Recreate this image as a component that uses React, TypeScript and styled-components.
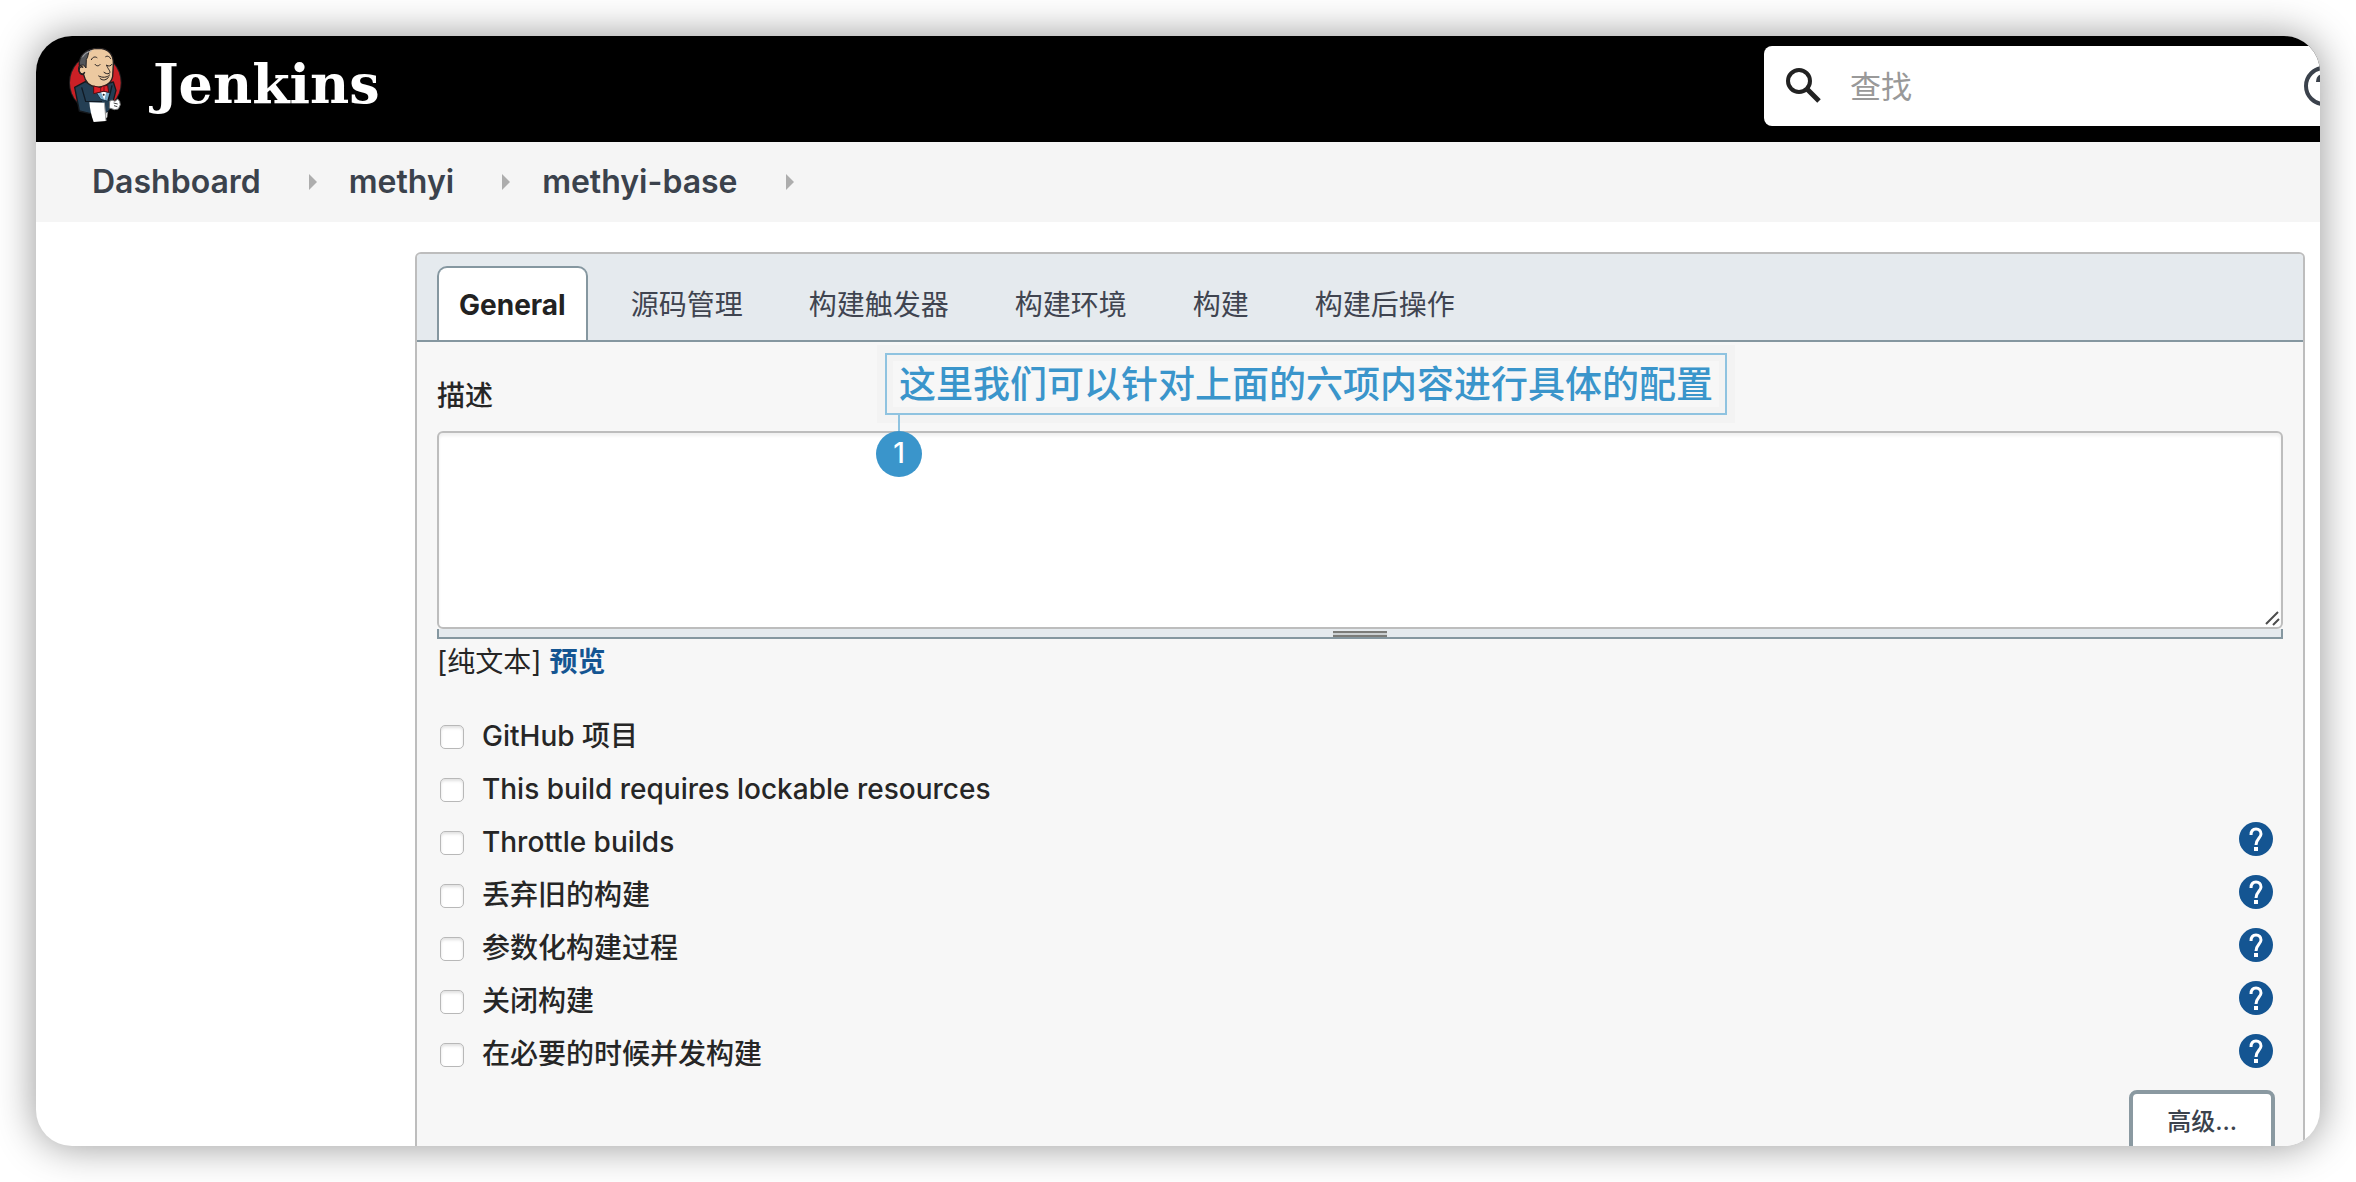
import React from "react";
import styled, { createGlobalStyle } from "styled-components";

const GlobalStyle = createGlobalStyle`
  *, *::before, *::after { box-sizing: border-box; }
  body {
    margin: 0;
    background: #ffffff;
    color: #262626;
    font-family: Inter, "Noto Sans CJK SC", sans-serif;
    font-size: 28px;
    line-height: 40px;
  }
  button, input, textarea { font-family: inherit; }
`;

const Stage = styled.div`
  height: 100vh;
  padding: 36px;
`;

const Window = styled.div`
  display: flex;
  flex-direction: column;
  height: 100%;
  overflow: hidden;
  border-radius: 36px;
  background: #ffffff;
  box-shadow: 0 0 40px rgba(0, 0, 0, 0.42);
`;

const Header = styled.header`
  display: flex;
  flex: none;
  justify-content: space-between;
  align-items: flex-start;
  height: 106px;
  padding: 10px 0 0 30px;
  background: #000000;
`;

const Brand = styled.a`
  display: flex;
  gap: 28px;
  color: #ffffff;
  text-decoration: none;
`;

const BrandName = styled.span`
  font-family: "DejaVu Serif", serif;
  font-size: 54px;
  font-weight: 700;
  line-height: 76px;
`;

const SearchBox = styled.div`
  display: flex;
  flex: none;
  align-items: center;
  gap: 26px;
  width: 600px;
  height: 80px;
  margin-right: -44px;
  padding: 0 20px;
  border-radius: 8px;
  background: #ffffff;
`;

const SearchInput = styled.input`
  flex: 1;
  min-width: 0;
  padding: 2px 0 0;
  border: 0;
  outline: 0;
  background: transparent;
  font-size: 31px;
  line-height: 48px;
  &::placeholder { color: #999999; opacity: 1; }
`;

const IconButton = styled.button`
  display: flex;
  flex: none;
  padding: 0;
  border: 0;
  background: transparent;
  cursor: pointer;
`;

const Breadcrumbs = styled.nav`
  display: flex;
  flex: none;
  align-items: center;
  height: 80px;
  padding-left: 56px;
  background: #f5f5f5;
`;

const Crumb = styled.a`
  color: #3b424c;
  font-size: 32px;
  font-weight: 600;
  text-decoration: none;
`;

const CrumbArrow = styled.span`
  flex: none;
  margin: 0 32px 0 48px;
  border: 8px solid transparent;
  border-right-width: 0;
  border-left-color: #adadad;
`;

const Main = styled.main`
  display: flex;
  flex: 1;
  min-height: 0;
  padding: 30px 15px 0 379px;
`;

const Panel = styled.form`
  flex: 1;
  height: max-content;
  min-width: 0;
  border: 2px solid #bdbdbd;
  border-radius: 6px;
  background: #f7f7f7;
`;

const TabBar = styled.div`
  display: flex;
  gap: 20px;
  padding: 12px 20px 0;
  border-bottom: 2px solid #8597a0;
  border-radius: 4px 4px 0 0;
  background: #e5eaee;
`;

const Tab = styled.button<{ $active?: boolean }>`
  height: 74px;
  padding: 2px ${(p) => (p.$active ? 20 : 21)}px 0;
  border: 2px solid ${(p) => (p.$active ? "#8597a0" : "transparent")};
  border-bottom: 0;
  border-radius: 10px 10px 0 0;
  background: ${(p) => (p.$active ? "#ffffff" : "transparent")};
  color: ${(p) => (p.$active ? "#222222" : "#3f4450")};
  font-size: 28px;
  font-weight: ${(p) => (p.$active ? 700 : 400)};
  line-height: 40px;
  cursor: pointer;
`;

const PanelBody = styled.div`
  position: relative;
  padding: 34px 20px 60px;
`;

const FieldLabel = styled.label`
  display: block;
  margin-bottom: 15px;
  font-weight: 500;
`;

const EditorFrame = styled.div`
  position: relative;
`;

const Editor = styled.textarea`
  display: block;
  width: 100%;
  height: 198px;
  padding: 12px;
  border: 2px solid #bdbdbd;
  border-radius: 6px;
  outline: 0;
  background: #ffffff;
  box-shadow: inset 0 3px 3px rgba(0, 0, 0, 0.06);
  font-size: 28px;
  resize: none;
`;

const ResizeCorner = styled.svg`
  position: absolute;
  right: 2px;
  bottom: 2px;
`;

const DragBar = styled.div`
  display: flex;
  justify-content: center;
  height: 10px;
  padding-top: 2px;
  border: 2px solid #8597a0;
  border-top: 0;
  background: #e5eaee;
  cursor: row-resize;
`;

const DragHandle = styled.span`
  width: 54px;
  height: 6px;
  border: solid #7b7c79;
  border-width: 2px 0;
  background: #cbd0d2;
`;

const FormatRow = styled.div`
  display: flex;
  gap: 8px;
  margin: 3px 0 28px;
`;

const PreviewLink = styled.a`
  color: #145592;
  font-weight: 700;
  text-decoration: none;
`;

const OptionRow = styled.div`
  display: flex;
  align-items: center;
  height: 53px;
  padding: 0 10px 0 3px;
`;

const Checkbox = styled.input`
  flex: none;
  width: 24px;
  height: 24px;
  margin: 0 18px 0 0;
  border: 1px solid #b8b8b8;
  border-radius: 5px;
  appearance: none;
  background: #ffffff;
  box-shadow: inset 0 2px 3px rgba(0, 0, 0, 0.12);
  &:checked { background: #145592; }
`;

const OptionLabel = styled.label`
  flex: 1;
  padding-bottom: 2px;
  font-weight: 500;
`;

const HelpButton = styled(IconButton)`
  margin-bottom: 8px;
`;

const Actions = styled.div`
  display: flex;
  justify-content: flex-end;
  padding: 9px 8px 0 0;
`;

const AdvancedButton = styled.button`
  padding: 8px 34px;
  border: 4px solid #8a99a1;
  border-radius: 8px;
  background: #ffffff;
  color: #3b424c;
  font-size: 24px;
  font-weight: 500;
  line-height: 40px;
  cursor: pointer;
`;

const Annotation = styled.aside`
  position: absolute;
  z-index: 1;
  top: 11px;
  left: 468px;
  display: flex;
  flex-direction: column;
  align-items: flex-start;
  color: #3a95cb;
`;

const AnnotationText = styled.div`
  padding: 5px 12px 3px;
  border: 2px solid #8fc3e0;
  background: #f7f7f7;
  box-shadow: 0 0 0 8px #f3f3f3, inset 0 0 0 6px #f3f3f3;
  font-size: 37px;
  font-weight: 500;
  line-height: 50px;
  white-space: nowrap;
`;

const AnnotationStem = styled.span`
  width: 2px;
  height: 16px;
  margin-left: 13px;
  background: #8fc3e0;
`;

const AnnotationBadge = styled.span`
  display: flex;
  align-items: center;
  justify-content: center;
  width: 46px;
  height: 46px;
  margin-left: -9px;
  padding-bottom: 2px;
  border-radius: 50%;
  background: #3a95cb;
  color: #ffffff;
  font-size: 28px;
  font-weight: 500;
`;

function JenkinsLogo() {
  return (
    <svg width="59" height="79" viewBox="200 140 177 237" aria-hidden="true">
      <ellipse cx="288" cy="250" rx="79" ry="85" fill="#231f20" />
      <ellipse cx="288" cy="250" rx="76" ry="82" fill="#cb2026" />
      <path d="M226 264 L258 247 L284 262 L342 248 L350 273 L341 307 L324 340 L270 342 L240 335 Z" fill="#243f54" stroke="#15191d" strokeWidth="4" strokeLinejoin="round" />
      <path d="M240 196 C240 165 265 148 296 147 C327 147 343 165 342 194 L340 231 C336 252 315 266 290 263 C270 260 258 250 253 226 C236 227 232 197 248 196 Z" fill="#ecc9a0" stroke="#231f20" strokeWidth="4" />
      <path d="M240 198 C239 174 251 157 272 151 C264 164 268 172 261 180 L260 206 L253 197 Z" fill="#54565a" stroke="#231f20" strokeWidth="3" />
      <path d="M249 174 C256 163 264 158 277 154" stroke="#a9abae" strokeWidth="3" fill="none" />
      <path d="M252 204 C240 197 235 213 244 222 C249 226 255 223 256 218" fill="#ecc9a0" stroke="#231f20" strokeWidth="4" />
      <path d="M276 181 C280 172 288 171 293 175 M319 172 C325 168 331 172 334 178 M287 195 C291 201 298 201 302 196 M322 198 C328 202 335 200 338 195 M322 198 C324 208 336 216 330 222 C324 225 318 222 314 219 M298 230 C309 236 323 235 331 227 M302 237 C310 246 323 242 328 233" fill="none" stroke="#231f20" strokeWidth="3" strokeLinecap="round" />
      <path d="M291 280 L315 275 L334 280 L326 306 L304 300 Z" fill="#76aac8" stroke="#183247" strokeWidth="3" />
      <path d="M305 278 L321 278 L315 302 Z" fill="#ffffff" />
      <path d="M283 260 L304 265 L309 261 L325 258 L328 279 L313 276 L304 278 L283 283 Z" fill="#e11f27" stroke="#4b1014" strokeWidth="3" strokeLinejoin="round" />
      <path d="M304 265 L304 278 M314 262 L314 276" stroke="#781318" strokeWidth="3" />
      <circle cx="313" cy="286" r="3" fill="#222222" />
      <path d="M247 264 L259 306 L308 307 M338 258 L334 276 L326 304" fill="none" stroke="#101a24" strokeWidth="4" />
      <path d="M308 312 L332 306 L331 330 L322 337 Z" fill="#243f54" />
      <path d="M331 306 L338 302 L347 306 L355 299 L361 306 L363 316 L357 329 L346 331 L330 326 Z" fill="#ffffff" stroke="#777777" strokeWidth="3" strokeLinejoin="round" />
      <path d="M343 311 L355 314 M344 319 L354 322" stroke="#444444" strokeWidth="3" />
      <path d="M270 309 L315 310 L320 365 L283 368 C276 350 272 330 270 309 Z" fill="#ffffff" />
      <path d="M315 310 L320 365" stroke="#aaaaaa" strokeWidth="3" />
      <path d="M320 340 L325 338 L324 354 L320 356 Z" fill="#dddddd" />
    </svg>
  );
}

function SearchIcon() {
  return (
    <svg width="40" height="40" viewBox="0 0 40 40" fill="none" stroke="#222222" aria-hidden="true">
      <ellipse cx="15" cy="15" rx="11" ry="11" strokeWidth="4" />
      <path d="M23 23 L35 35" strokeWidth="5" />
    </svg>
  );
}

function HelpIcon() {
  return (
    <svg width="34" height="34" viewBox="0 0 34 34" aria-hidden="true">
      <circle cx="17" cy="17" r="17" fill="#145592" />
      <path d="M12 13 C12 9 14 7 17 7 C20 7 22 9 22 12 C22 16 17 17 17 23" fill="none" stroke="#ffffff" strokeWidth="3" />
      <rect x="15" y="25" width="4" height="4" fill="#ffffff" />
    </svg>
  );
}

function HelpOutlineIcon() {
  return (
    <svg width="40" height="40" viewBox="0 0 40 40" aria-hidden="true">
      <circle cx="20" cy="20" r="18" fill="none" stroke="#3b424c" strokeWidth="4" />
      <path d="M14 16 C14 12 16 10 20 10 C24 10 26 13 26 16 C26 20 20 20 20 25" fill="none" stroke="#3b424c" strokeWidth="4" />
      <rect x="18" y="28" width="4" height="4" fill="#3b424c" />
    </svg>
  );
}

const crumbs = ["Dashboard", "methyi", "methyi-base"];
const tabs = ["General", "源码管理", "构建触发器", "构建环境", "构建", "构建后操作"];
const options = [
  { id: "github", label: "GitHub 项目", help: false },
  { id: "lockable", label: "This build requires lockable resources", help: false },
  { id: "throttle", label: "Throttle builds", help: true },
  { id: "discard", label: "丢弃旧的构建", help: true },
  { id: "params", label: "参数化构建过程", help: true },
  { id: "disable", label: "关闭构建", help: true },
  { id: "concurrent", label: "在必要的时候并发构建", help: true },
];

export default function App() {
  return (
    <>
      <GlobalStyle />
      <Stage>
        <Window>
          <Header>
            <Brand href="#">
              <JenkinsLogo />
              <BrandName>Jenkins</BrandName>
            </Brand>
            <SearchBox role="search">
              <SearchIcon />
              <SearchInput type="text" placeholder="查找" aria-label="查找" />
              <IconButton type="button" aria-label="帮助">
                <HelpOutlineIcon />
              </IconButton>
            </SearchBox>
          </Header>
          <Breadcrumbs>
            {crumbs.map((name) => (
              <React.Fragment key={name}>
                <Crumb href="#">{name}</Crumb>
                <CrumbArrow />
              </React.Fragment>
            ))}
          </Breadcrumbs>
          <Main>
            <Panel>
              <TabBar role="tablist">
                {tabs.map((name, i) => (
                  <Tab key={name} type="button" role="tab" aria-selected={i === 0} $active={i === 0}>
                    {name}
                  </Tab>
                ))}
              </TabBar>
              <PanelBody>
                <FieldLabel htmlFor="description">描述</FieldLabel>
                <EditorFrame>
                  <Editor id="description" />
                  <ResizeCorner width="16" height="16" viewBox="0 0 16 16" stroke="#4d4d4d" strokeWidth="2" aria-hidden="true">
                    <path d="M1 13 L13 1 M8 14 L14 8" />
                  </ResizeCorner>
                </EditorFrame>
                <DragBar>
                  <DragHandle />
                </DragBar>
                <FormatRow>
                  <span>[纯文本]</span>
                  <PreviewLink href="#">预览</PreviewLink>
                </FormatRow>
                {options.map((o) => (
                  <OptionRow key={o.id}>
                    <Checkbox type="checkbox" id={o.id} />
                    <OptionLabel htmlFor={o.id}>{o.label}</OptionLabel>
                    {o.help && (
                      <HelpButton type="button" aria-label="帮助">
                        <HelpIcon />
                      </HelpButton>
                    )}
                  </OptionRow>
                ))}
                <Actions>
                  <AdvancedButton type="button">高级...</AdvancedButton>
                </Actions>
                <Annotation>
                  <AnnotationText>这里我们可以针对上面的六项内容进行具体的配置</AnnotationText>
                  <AnnotationStem />
                  <AnnotationBadge>1</AnnotationBadge>
                </Annotation>
              </PanelBody>
            </Panel>
          </Main>
        </Window>
      </Stage>
    </>
  );
}
